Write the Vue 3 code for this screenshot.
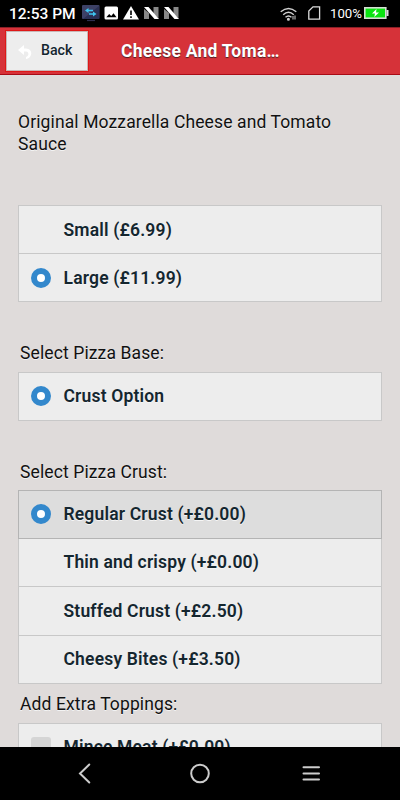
<script setup>
const sizes = [
  { label: 'Small (£6.99)', checked: false },
  { label: 'Large (£11.99)', checked: true },
]
const bases = [{ label: 'Crust Option', checked: true }]
const crusts = [
  { label: 'Regular Crust (+£0.00)', checked: true, active: true },
  { label: 'Thin and crispy (+£0.00)', checked: false },
  { label: 'Stuffed Crust (+£2.50)', checked: false },
  { label: 'Cheesy Bites (+£3.50)', checked: false },
]
const groups = [
  { key: 'size', title: '', options: sizes },
  { key: 'base', title: 'Select Pizza Base:', options: bases },
  { key: 'crust', title: 'Select Pizza Crust:', options: crusts },
]
</script>

<template>
  <div class="screen">
    <div class="status">
      <span class="time">12:53 PM</span>
      <svg class="app-icons" width="102" height="20" viewBox="0 0 102 20">
        <rect x="1" y="0" width="17.5" height="14" rx="1" fill="#3d4166" />
        <path d="M2 14h16v-13z" fill="#2b3054" />
        <path d="M6 15.500h8" stroke="#2b2f4f" stroke-width="1.2" />
        <path d="M4 5.500l3.500-2.500v1.700h4.500v1.600H7.500V8zM15.500 9l-3.500-2.500v1.700H8v1.600h4v1.700z" fill="#3fc4ef" />
        <rect x="23.500" y="1.500" width="13.5" height="13" rx="1.5" fill="#fff" />
        <path d="M25.300 12.300l2.900-3.300 2 2 2.300-2.800 3 4.100z" fill="#000" />
        <path d="M50 1L58 14.500H42z" fill="#fff" />
        <path d="M50 5.500v4.500M50 11.300v1.600" stroke="#000" stroke-width="1.600" />
        <g v-for="x in [63, 83]" :key="x" :transform="`translate(${x} 2)`">
          <path d="M0 2l5 4v6H0zM9.500 0h5v11l-5-4z" fill="#888" />
          <path d="M0 0h4.500L15 12h-4.500z" fill="#fff" />
        </g>
      </svg>
      <span class="grow"></span>
      <svg class="wifi" width="18" height="16" viewBox="0 0 18 16" fill="none" stroke="#d0d0d0" stroke-width="1.4">
        <path d="M.7 4.800Q8.500-2 16.300 4.800M3.200 7.700Q8.500 3 13.800 7.700M5.500 10.300Q8.500 7.600 11.500 10.300" />
        <circle cx="8.400" cy="12.200" r=".8" fill="#d0d0d0" />
        <path d="M13 9v3.500M15 8.500V12.500" stroke-width="1" />
      </svg>
      <svg class="sim" width="13" height="14" viewBox="0 0 13 14" fill="none" stroke="#ddd" stroke-width="1.300">
        <path d="M5 .8h6.600v12.400H.8V5z" />
      </svg>
      <span class="percent">100%</span>
      <svg class="battery" width="25" height="12" viewBox="0 0 25 12">
        <rect x=".8" y=".8" width="21" height="10.400" fill="#0be311" stroke="#d5dfd4" stroke-width="1.600" />
        <path d="M22.500 3h2v6h-2z" fill="#ddd" />
        <path d="M12.500 2L8 6.500h3L10.300 10l4.700-4.500h-3z" fill="#fff" />
      </svg>
    </div>

    <header class="header">
      <button class="back">
        <svg width="14" height="15" viewBox="0 0 14 15" fill="none">
          <path d="M6 0L0 5l6 5V6.500h2c3.200 0 3.200 4.500 0 5.500v2c6.500-1 7.500-10.200 0-10.500H6z" fill="#fff" />
        </svg>
        <span>Back</span>
      </button>
      <h1>Cheese And Toma…</h1>
    </header>

    <main class="content">
      <p class="description">Original Mozzarella Cheese and Tomato Sauce</p>
      <section v-for="g in groups" :key="g.key" :class="['section', g.key]">
        <h2 v-if="g.title">{{ g.title }}</h2>
        <div class="group">
          <label v-for="o in g.options" :key="o.label" :class="['option', { active: o.active }]">
            <span :class="['radio', { checked: o.checked }]"></span>
            <span class="text">{{ o.label }}</span>
          </label>
        </div>
      </section>
      <section class="section toppings">
        <h2>Add Extra Toppings:</h2>
        <div class="group">
          <label class="option">
            <span class="checkbox"></span>
            <span class="text">Mince Meat (+£0.00)</span>
          </label>
        </div>
      </section>
    </main>

    <nav class="nav">
      <svg width="400" height="53" viewBox="0 0 400 53" fill="none" stroke="#ccc" stroke-width="2" stroke-linecap="round">
        <path d="M89.300 17.500L80 26.500l9.300 9" />
        <circle cx="200" cy="26.500" r="8.800" />
        <path d="M303.500 20.300h15.500M303.500 26.500h15.500M303.500 32.600h15.500" />
      </svg>
    </nav>
  </div>
</template>

<style>
body { background: #dfdbda; }
</style>

<style scoped>
* { box-sizing: border-box; }
.screen {
  width: 400px;
  height: 800px;
  display: flex;
  flex-direction: column;
  overflow: hidden;
  background: #dfdbda;
  font-family: Roboto, "Liberation Sans", sans-serif;
}
.status {
  flex: none;
  height: 27px;
  display: flex;
  align-items: flex-start;
  background: #000;
  color: #fff;
  padding: 5px 11px 0 9px;
}
.time { width: 72px; font-size: 15.5px; line-height: 19px; font-weight: 500; white-space: nowrap; }
.app-icons { flex: none; }
.grow { flex: 1; }
.wifi { margin: 2px 10px 0 0; }
.sim { margin: 1px 9px 0 0; }
.percent { width: 34px; font-size: 13.2px; line-height: 17px; white-space: nowrap; }
.battery { margin: 2px 0 0; }
.header {
  flex: none;
  height: 48px;
  display: flex;
  background: #d63239;
  border-top: 1px solid #8b2027;
  border-bottom: 1px solid #a90b15;
  padding: 2px 5px 0;
}
.back {
  width: 84px;
  height: 42px;
  display: flex;
  align-items: center;
  background: #ededed;
  border: 1px solid #df1717;
  outline: 1px solid #c9b6b6;
  outline-offset: -2px;
  padding: 0 0 2px 12px;
  font: 500 14.2px Roboto, "Liberation Sans", sans-serif;
  color: #14262f;
  gap: 9px;
  text-shadow: 0 1px 0 #f3f3f3;
}
.back svg { margin-top: 4px; }
.header h1 {
  margin: 10px 0 0 32px;
  font-size: 17.5px;
  line-height: 22px;
  font-weight: 700;
  letter-spacing: 0.25px;
  color: #fff;
  text-shadow: 0 1px 1px #4b2022;
  white-space: nowrap;
}
.content {
  flex: 1;
  min-height: 0;
  overflow: hidden;
  padding: 35px 18px 0;
  border-top: 1px solid #ddd;
}
.description {
  margin: 0;
  width: 340px;
  height: 94px;
  font-size: 17.5px;
  line-height: 22px;
  letter-spacing: 0.12px;
  color: #111;
  text-shadow: 0 1px 0 #f3f3f3;
}
.section { display: flex; flex-direction: column; }
.section h2 {
  margin: 0 0 0 2px;
  height: 30px;
  font-size: 17.5px;
  line-height: 22px;
  font-weight: 400;
  letter-spacing: 0.12px;
  color: #111;
  text-shadow: 0 1px 0 #f3f3f3;
}
.base { margin-top: 40px; }
.crust { margin-top: 40px; }
.crust h2 { height: 29px; }
.toppings { margin-top: 8.5px; }
.group { border: 1px solid #c8c8c8; background: #ededed; }
.option {
  height: 48.5px;
  display: flex;
  align-items: center;
  padding: 0 0 0 12px;
  border-top: 1px solid #c8c8c8;
}
.option:first-child { height: 46.5px; border-top: 0; }
.size .option:first-child { padding-top: 1px; }
.size .option:last-child { padding-top: 1px; }
.crust .option:first-child { height: 47px; }
.option.active { background: #ddd; outline: 1px solid #b4b4b4; }
.radio { width: 20px; height: 20px; margin-right: 12.5px; border-radius: 50%; }
.radio.checked { background: #fff; border: 6px solid #3388cc; }
.checkbox { width: 20px; height: 20px; margin-right: 12.5px; border-radius: 3px; background: #d5d5d5; }
.text {
  font-size: 17.5px;
  font-weight: 600;
  line-height: 22px;
  letter-spacing: 0.17px;
  color: #14262f;
  text-shadow: 0 1px 0 #f5f5f5;
}
.nav { flex: none; height: 53px; background: #000; }
.nav svg { display: block; }
</style>
